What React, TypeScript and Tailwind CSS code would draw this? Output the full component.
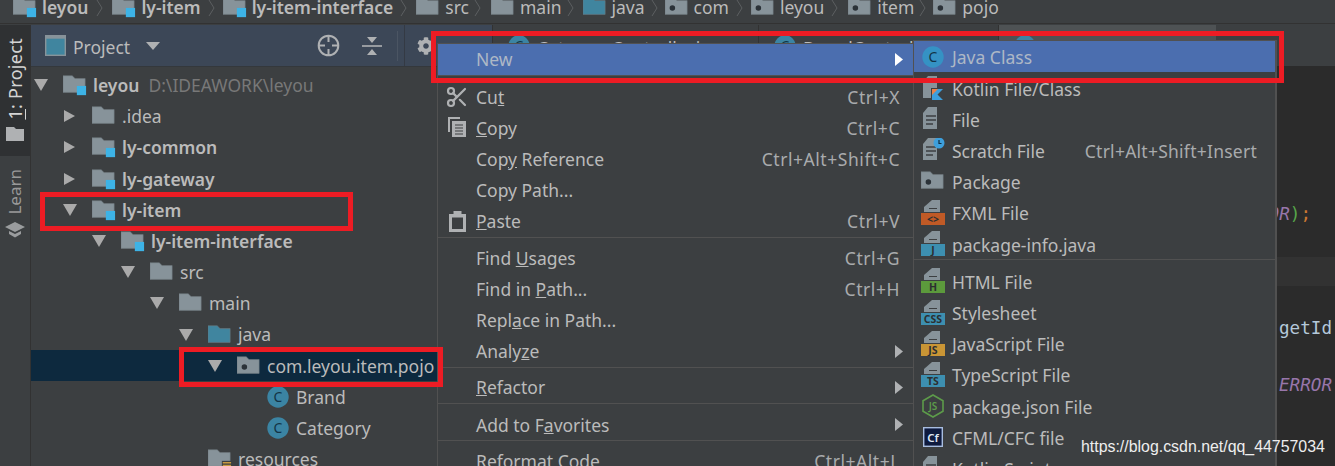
import React from "react";
import { Scissors } from "lucide-react";
import { FaCog } from "react-icons/fa";

const F = "#87939a";
const folderPath = "M0 1h10l3 3h11v15H0z";

function Folder({ color = F, dot = false, badge = false, res = false, w = 24 }: { color?: string; dot?: boolean; badge?: boolean; res?: boolean; w?: number }) {
  return (
    <svg width={w} height={22} viewBox="0 0 26 22" className="shrink-0">
      <path d={folderPath} fill={color} stroke="#6f7a80" strokeWidth="0.6" />
      {dot && <circle cx="8" cy="12" r="3" fill="#2b3238" />}
      {badge && <rect x="15" y="12" width="10" height="10" fill="#3db3e6" />}
      {res && (
        <g>
          <rect x="15" y="13" width="10" height="9" fill="#3c3f41" />
          <path d="M16 15h9M16 18h9M16 21h9" stroke="#c99a3f" strokeWidth="1.6" />
        </g>
      )}
    </svg>
  );
}

function ClassIcon({ bg = "#3b84a3", fg = "#123446" }: { bg?: string; fg?: string }) {
  return (
    <svg width={22} height={22} viewBox="0 0 22 22" className="shrink-0">
      <circle cx="11" cy="11" r="10.7" fill={bg} />
      <text x="11" y="16" textAnchor="middle" fontSize="14" fontFamily="Noto Sans, sans-serif" fill={fg}>C</text>
    </svg>
  );
}

function Arrow({ open }: { open: boolean }) {
  return open ? (
    <svg width={14} height={12} viewBox="0 0 14 12" className="shrink-0"><path d="M0 0h14L7 12z" fill="#aaaaaa" /></svg>
  ) : (
    <svg width={14} height={14} viewBox="0 0 14 14" className="shrink-0"><path d="M1 1l11 6-11 6z" fill="#aaaaaa" /></svg>
  );
}

function Chevron() {
  return (
    <svg width={8} height={18} viewBox="0 0 8 18" className="shrink-0 mt-[2px]"><path d="M1 1l5 8-5 8" fill="none" stroke="#5c5f61" strokeWidth="1" /></svg>
  );
}

function Crumb({ label, bold, icon, last, mr }: { label: string; bold?: boolean; icon: React.ReactNode; last?: boolean; mr: string }) {
  return (
    <div className="flex items-center shrink-0">
      {icon}
      <span className={`ml-[5px] text-[17.5px] ${bold ? "font-semibold" : ""}`}>{label}</span>
      {!last && <div className={`flex ${mr}`}><Chevron /></div>}
    </div>
  );
}

function TreeRow({ pad, open, icon, label, bold, extra, selected, gap = "ml-[6px]" }: { pad: string; open?: boolean; icon: React.ReactNode; label: string; bold?: boolean; extra?: string; selected?: boolean; gap?: string }) {
  return (
    <div className={`flex items-center h-[31.2px] shrink-0 ${pad} ${selected ? "bg-[#0d293e]" : ""}`}>
      {open !== undefined && <div className="w-[14px] mr-[15px] flex justify-center"><Arrow open={open} /></div>}
      {icon}
      <span className={`${gap} text-[17.5px] whitespace-nowrap ${bold ? "font-semibold" : ""}`}>{label}</span>
      {extra && <span className="ml-[9px] text-[17.5px] text-[#787878] whitespace-nowrap">{extra}</span>}
    </div>
  );
}

function FileIcon({ clock }: { clock?: boolean }) {
  return (
    <svg width={26} height={24} viewBox="0 0 26 24" className="shrink-0">
      <path d="M7 0h9v22H2V6z" fill={F} transform="translate(1 0)" />
      <path d="M6 9h10M6 13h10M6 17h7" stroke="#3c3f41" strokeWidth="1.4" />
      {clock && (
        <g>
          <circle cx="19" cy="5" r="5.5" fill="#3d9fdc" />
          <path d="M19 2v3.5h2.5" stroke="#0f2c3f" strokeWidth="1.2" fill="none" />
        </g>
      )}
    </svg>
  );
}

function BadgeFile({ color, label, fg = "#2c2f31" }: { color: string; label: string; fg?: string }) {
  return (
    <svg width={24} height={25} viewBox="0 0 24 25" className="shrink-0">
      <path d="M11 0h8v12H3V7z" fill={F} />
      <path d="M8 8.5h8" stroke="#3c3f41" strokeWidth="1" />
      <rect x="0" y="13" width="24" height="12" fill={color} />
      <text x="12" y="23" textAnchor="middle" fontSize="10.5" fontWeight="700" fontFamily="Noto Sans, sans-serif" fill={fg}>{label}</text>
    </svg>
  );
}

function KotlinFile() {
  return (
    <svg width={26} height={24} viewBox="0 0 26 24" className="shrink-0">
      <path d="M7 0h9v22H2V6z" fill={F} transform="translate(1 0)" />
      <rect x="11" y="12" width="12" height="12" fill="#3c3f41" />
      <path d="M12 13h11l-5.5 5.5L23 24H12z" fill="#3d9fdc" />
      <path d="M12 13h6l-6 6z" fill="#e8824a" />
    </svg>
  );
}

function NodeIcon() {
  return (
    <svg width={24} height={24} viewBox="0 0 24 24" className="shrink-0">
      <path d="M12 1l10 5.7v10.6L12 23 2 17.3V6.7z" fill="none" stroke="#5d9b4a" strokeWidth="1.6" />
      <text x="12" y="16" textAnchor="middle" fontSize="10" fontFamily="Noto Sans, sans-serif" fontWeight="600" fill="#5d9b4a">JS</text>
    </svg>
  );
}

function CfIcon() {
  return (
    <svg width={20} height={20} viewBox="0 0 20 20" className="shrink-0">
      <rect x="0.7" y="0.7" width="18.6" height="18.6" fill="#0e1a3e" stroke="#a8bde0" strokeWidth="1.4" />
      <text x="10" y="14.5" textAnchor="middle" fontSize="11.5" fontWeight="600" fontFamily="Noto Sans, sans-serif" fill="#dfe8f5">Cf</text>
    </svg>
  );
}

function CopyIcon() {
  return (
    <svg width={20} height={21} viewBox="0 0 20 21" className="shrink-0">
      <path d="M1 0h12v2H3v13H1z" fill="#afb1b3" />
      <path d="M5 4h14v16H5z" fill="#afb1b3" />
      <path d="M8 8h8M8 11h8M8 14h8M8 17h8" stroke="#3c3f41" strokeWidth="1.2" />
    </svg>
  );
}

function PasteIcon() {
  return (
    <svg width={17} height={21} viewBox="0 0 17 21" className="shrink-0">
      <path d="M0 3h17v18H0z" fill="#afb1b3" />
      <path d="M3 6.5h11v11.5H3z" fill="#3c3f41" />
      <path d="M4.5 0h8v5h-8z" fill="#afb1b3" />
    </svg>
  );
}

function SubArrow({ light }: { light?: boolean }) {
  return <svg width={8} height={13} viewBox="0 0 8 13" className="shrink-0"><path d="M0 0l8 6.5L0 13z" fill={light ? "#ffffff" : "#afb1b3"} /></svg>;
}

function MenuItem({ icon, children, shortcut, sub, active, inSub }: { icon?: React.ReactNode; children: React.ReactNode; shortcut?: string; sub?: boolean; active?: boolean; inSub?: boolean }) {
  return (
    <div className={`flex items-center h-[31.2px] shrink-0 pr-[10px] ${active ? "bg-[#4b6eaf] text-[#aeb8c6]" : ""}`}>
      <div className="w-[39px] flex justify-center shrink-0 -ml-[1px] pl-[1px]">{icon}</div>
      <span className={`whitespace-nowrap ${inSub ? "pt-[2px]" : ""}`}>{children}</span>
      {shortcut && <span className={`ml-auto whitespace-nowrap text-[#a9abad] ${inSub ? "mr-[8px] pt-[2px] tracking-[0.25px]" : "mr-[3px] tracking-[0.55px]"}`}>{shortcut}</span>}
      {sub && <span className="ml-auto"><SubArrow light={active} /></span>}
    </div>
  );
}

function Sep({ h = "h-[5px]" }: { h?: string }) {
  return <div className={`${h} shrink-0 border-t border-[#515151]`} />;
}

function EditorTab({ w, label, active }: { w: string; label: string; active?: boolean }) {
  return (
    <div className={`${w} h-full flex items-center pl-[15px] border-l border-[#323232] shrink-0 ${active ? "bg-[#4e5254]" : ""}`}>
      <ClassIcon />
      <span className="ml-[7px] pt-[5px] text-[17.5px] whitespace-nowrap">{label}</span>
    </div>
  );
}

function CodeLine({ children, band }: { children?: React.ReactNode; band?: boolean }) {
  return <div className={`h-[28.5px] shrink-0 flex items-center justify-end ${band ? "bg-[#323232]" : ""}`}>{children}</div>;
}

export default function App() {
  return (
    <div className="relative w-[1335px] h-[466px] overflow-hidden bg-[#3c3f41] text-[#bbbbbb] flex flex-col font-['Noto_Sans',sans-serif]">
      {/* breadcrumb */}
      <div className="h-[24px] shrink-0 overflow-hidden border-b border-[#323232] pl-[13px]">
        <div className="flex h-[14px] items-center">
          <Crumb label="leyou" bold mr="ml-[8px] mr-[8px]" icon={<Folder badge />} />
          <Crumb label="ly-item" bold mr="ml-[7px] mr-[7px]" icon={<Folder badge />} />
          <Crumb label="ly-item-interface" bold mr="ml-[7px] mr-[8px]" icon={<Folder badge />} />
          <Crumb label="src" mr="ml-[5px] mr-[9px]" icon={<Folder />} />
          <Crumb label="main" mr="ml-[5px] mr-[8px]" icon={<Folder />} />
          <Crumb label="java" mr="ml-[6px] mr-[6px]" icon={<Folder color="#40859f" />} />
          <Crumb label="com" mr="ml-[7px] mr-[7px]" icon={<Folder dot />} />
          <Crumb label="leyou" mr="ml-[7px] mr-[9px]" icon={<Folder dot />} />
          <Crumb label="item" mr="ml-[5px] mr-[6px]" icon={<Folder dot />} />
          <Crumb label="pojo" last mr="" icon={<Folder dot />} />
        </div>
      </div>

      <div className="flex flex-1 min-h-0 pt-px">
        {/* tool window rail */}
        <div className="w-[31px] shrink-0 border-r border-[#323232] flex flex-col">
          <div className="h-[131px] shrink-0 bg-[#2f3133] flex flex-col items-center pt-[13px] pr-[1px]">
            <span className="[writing-mode:vertical-rl] rotate-180 text-[18px] tracking-[0.3px] leading-[20px] text-[#d4d4d4] whitespace-nowrap"><span className="underline">1</span>: Project</span>
            <svg width={18} height={14} viewBox="0 0 18 14" className="mt-[7px]"><path d="M0 0h8l2 2h8v12H0z" fill="#afb1b3" /></svg>
          </div>
          <div className="flex flex-col items-center pt-[13px] pr-[1px]">
            <span className="[writing-mode:vertical-rl] rotate-180 text-[17px] leading-[20px] text-[#999999] whitespace-nowrap">Learn</span>
            <svg width={20} height={16} viewBox="0 0 20 16" className="mt-[7px]">
              <path d="M10 0l10 5-10 5L0 5z" fill="#9a9c9e" />
              <path d="M4 9v3l6 3.5 6-3.5V9l-6 3z" fill="#9a9c9e" />
            </svg>
          </div>
        </div>

        {/* project panel */}
        <div className="w-[461px] shrink-0 flex flex-col overflow-hidden">
          <div className="h-[42px] shrink-0 bg-[#3c4757] border-b border-[#34383c] flex items-center pl-[14px]">
            <svg width={21} height={21} viewBox="0 0 21 21" className="shrink-0">
              <rect x="0.7" y="0.7" width="19.6" height="19.6" fill="#40859f" stroke="#87939a" strokeWidth="1.4" />
              <rect x="0.7" y="0.7" width="19.6" height="3" fill="#87939a" />
            </svg>
            <span className="ml-[7px] pt-[3px] text-[17.5px]">Project</span>
            <svg width={14} height={8} viewBox="0 0 14 8" className="ml-[16px]"><path d="M0 0h14L7 8z" fill="#afb1b3" /></svg>
            <svg width={23} height={23} viewBox="0 0 23 23" className="ml-[157px]">
              <circle cx="11.5" cy="11.5" r="9.8" fill="none" stroke="#afb1b3" strokeWidth="2" />
              <path d="M11.5 2v6M11.5 15v6M2 11.5h6M15 11.5h6" stroke="#afb1b3" strokeWidth="2" />
            </svg>
            <svg width={20} height={20} viewBox="0 0 20 20" className="ml-[22px]">
              <path d="M0 10h20" stroke="#afb1b3" strokeWidth="1.6" />
              <path d="M10 7L5 1h10zM10 13l-5 6h10z" fill="#afb1b3" />
            </svg>
            <div className="ml-[15px] h-[30px] w-px bg-[#4b5563]" />
            <div className="ml-[6px] h-full w-px bg-[#343a44]" />
            <FaCog className="ml-[12px] shrink-0 text-[#afb1b3]" size={18} />
          </div>
          <div className="flex flex-col pt-[2.5px]">
            <TreeRow pad="pl-[3px]" open icon={<Folder badge />} label="leyou" bold extra="D:\IDEAWORK\leyou" />
            <TreeRow pad="pl-[32px]" open={false} icon={<Folder />} label=".idea" />
            <TreeRow pad="pl-[32px]" open={false} icon={<Folder badge />} label="ly-common" bold />
            <TreeRow pad="pl-[32px]" open={false} icon={<Folder badge />} label="ly-gateway" bold />
            <TreeRow pad="pl-[32px]" open icon={<Folder badge />} label="ly-item" bold />
            <TreeRow pad="pl-[61px]" open icon={<Folder badge />} label="ly-item-interface" bold />
            <TreeRow pad="pl-[90px]" open icon={<Folder />} label="src" />
            <TreeRow pad="pl-[119px]" open icon={<Folder />} label="main" />
            <TreeRow pad="pl-[148px]" open icon={<Folder color="#40859f" />} label="java" />
            <TreeRow pad="pl-[177px]" open icon={<Folder dot />} label="com.leyou.item.pojo" selected />
            <TreeRow pad="pl-[236px]" icon={<ClassIcon />} label="Brand" gap="ml-[7px]" />
            <TreeRow pad="pl-[236px]" icon={<ClassIcon />} label="Category" gap="ml-[7px]" />
            <TreeRow pad="pl-[177px]" icon={<Folder res />} label="resources" />
          </div>
        </div>

        {/* editor */}
        <div className="flex-1 min-w-0 flex flex-col overflow-hidden">
          <div className="h-[41px] shrink-0 flex">
            <EditorTab w="w-[266px]" label="CategoryController.java" />
            <EditorTab w="w-[240px]" label="BrandController.java" />
            <EditorTab w="w-[218px]" label="BrandService.java" active />
          </div>
          <div className="flex-1 bg-[#2b2b2b] flex flex-col pt-[20px] font-['DejaVu_Sans_Mono',monospace] text-[17.6px]">
            <CodeLine /><CodeLine /><CodeLine /><CodeLine />
            <CodeLine>
              <span className="mr-[24px] whitespace-nowrap"><span className="italic text-[#9876aa]">ERROR</span><span className="text-[#57a64a]">)</span><span className="text-[#cc7832]">;</span></span>
            </CodeLine>
            <CodeLine />
            <CodeLine band />
            <CodeLine />
            <CodeLine><span className="mr-[3px] text-[#b4c8da]">getId</span></CodeLine>
            <CodeLine />
            <CodeLine><span className="mr-[3px] italic text-[#9876aa]">ERROR</span></CodeLine>
          </div>
        </div>
      </div>

      {/* context menu */}
      <div className="absolute left-[437px] top-[43px] w-[477px] h-[440px] bg-[#3c3f41] border border-[#515151] flex flex-col text-[17.5px]">
        <MenuItem sub active>New</MenuItem>
        <Sep h="h-[6px]" />
        <MenuItem icon={<Scissors size={24} strokeWidth={2.2} color="#afb1b3" />} shortcut="Ctrl+X">Cu<u>t</u></MenuItem>
        <MenuItem icon={<CopyIcon />} shortcut="Ctrl+C"><u>C</u>opy</MenuItem>
        <MenuItem shortcut="Ctrl+Alt+Shift+C">Cop<u>y</u> Reference</MenuItem>
        <MenuItem>Copy Path...</MenuItem>
        <MenuItem icon={<PasteIcon />} shortcut="Ctrl+V"><u>P</u>aste</MenuItem>
        <Sep />
        <MenuItem shortcut="Ctrl+G">Find <u>U</u>sages</MenuItem>
        <MenuItem shortcut="Ctrl+H">Find in <u>P</u>ath...</MenuItem>
        <MenuItem>Repl<u>a</u>ce in Path...</MenuItem>
        <MenuItem sub>Analy<u>z</u>e</MenuItem>
        <Sep />
        <MenuItem sub><u>R</u>efactor</MenuItem>
        <Sep h="h-[6px]" />
        <MenuItem sub>Add to F<u>a</u>vorites</MenuItem>
        <Sep />
        <MenuItem shortcut="Ctrl+Alt+L">Reformat Code</MenuItem>
      </div>

      {/* submenu */}
      <div className="absolute left-[913px] top-[40px] w-[364px] h-[460px] bg-[#3c3f41] border border-[#515151] border-r-2 flex flex-col text-[17.5px]">
        <MenuItem inSub active icon={<ClassIcon bg="#3592c4" fg="#123446" />}>Java Class</MenuItem>
        <MenuItem inSub icon={<KotlinFile />}>Kotlin File/Class</MenuItem>
        <MenuItem inSub icon={<FileIcon />}>File</MenuItem>
        <MenuItem inSub icon={<FileIcon clock />} shortcut="Ctrl+Alt+Shift+Insert">Scratch File</MenuItem>
        <MenuItem inSub icon={<Folder dot />}>Package</MenuItem>
        <MenuItem inSub icon={<BadgeFile color="#c05a26" label="<>" />}>FXML File</MenuItem>
        <MenuItem inSub icon={<BadgeFile color="#3d8fb0" label="J" />}>package-info.java</MenuItem>
        <Sep h="h-[6px]" />
        <MenuItem inSub icon={<BadgeFile color="#5c9a3c" label="H" />}>HTML File</MenuItem>
        <MenuItem inSub icon={<BadgeFile color="#3d8fb0" label="CSS" />}>Stylesheet</MenuItem>
        <MenuItem inSub icon={<BadgeFile color="#c99535" label="JS" />}>JavaScript File</MenuItem>
        <MenuItem inSub icon={<BadgeFile color="#3d8fb0" label="TS" />}>TypeScript File</MenuItem>
        <MenuItem inSub icon={<NodeIcon />}>package.json File</MenuItem>
        <MenuItem inSub icon={<CfIcon />}>CFML/CFC file</MenuItem>
        <MenuItem inSub icon={<FileIcon />}>Kotlin Script</MenuItem>
      </div>

      {/* red annotation frames */}
      <div className="absolute left-[40px] top-[192px] w-[313px] h-[39px] border-[5px] border-[#ed1c24]" />
      <div className="absolute left-[179px] top-[347px] w-[264px] h-[40px] border-[5px] border-[#ed1c24]" />
      <div className="absolute left-[431px] top-[31px] w-[853px] h-[52px] border-[5px] border-[#ed1c24]" />

      {/* watermark */}
      <div className="absolute left-[1081px] top-[437px] text-[15.9px] leading-[20px] text-[#eeeeee] font-['Liberation_Sans',sans-serif] whitespace-nowrap">https://blog.csdn.net/qq_44757034</div>
    </div>
  );
}
